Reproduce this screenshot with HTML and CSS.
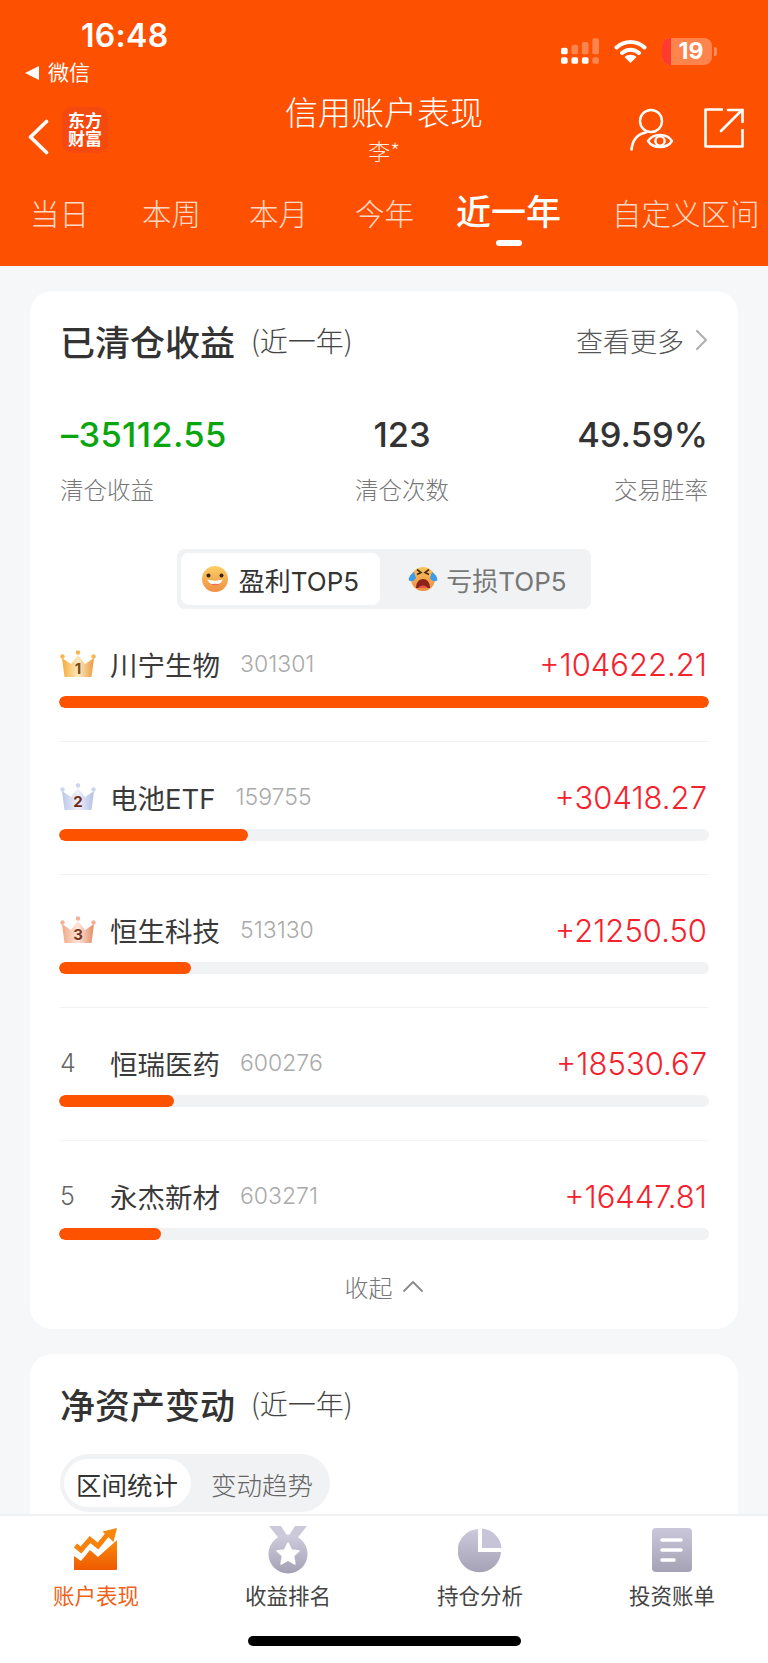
FILE: index.html
```
<!DOCTYPE html>
<html lang="zh-CN">
<head>
<meta charset="utf-8">
<title>信用账户表现</title>
<link rel="stylesheet" href="styles.css">
</head>
<body>
<div class="page">
  <header class="header">
    <div class="status">
      <div class="status-left">
        <div class="time">16:48</div>
        <div class="back-app"><span class="tri"></span>微信</div>
      </div>
      <div class="status-right">
        <svg class="signal" width="38" height="27" viewBox="0 0 40 28"><g fill="#fff"><rect x="0" y="10" width="7" height="7" rx="2"/><rect x="0" y="20" width="7" height="7" rx="2"/><rect x="11" y="20" width="7" height="7" rx="2"/><rect x="22" y="20" width="7" height="7" rx="2"/></g><g fill="#fff" opacity=".3"><rect x="11" y="7" width="7" height="10" rx="2"/><rect x="22" y="4" width="7" height="13" rx="2"/><rect x="33" y="0" width="7" height="17" rx="2"/></g><rect x="33" y="20" width="7" height="7" rx="2" fill="#fff" opacity=".3"/></svg>
        <svg class="wifi" width="33" height="25" viewBox="0 0 33 25"><path d="M2.5 9.5C10.5 2 22.5 2 30.5 9.5M8 15C13 10.5 20 10.5 25 15" fill="none" stroke="#fff" stroke-width="4" stroke-linecap="round"/><path d="M16.5 25L10.5 19C14 16 19 16 22.5 19Z" fill="#fff"/></svg>
        <div class="battery"><div class="battery-body"><span class="battery-red"></span><span class="battery-num">19</span></div><span class="battery-nub"></span></div>
      </div>
    </div>
    <div class="titlebar">
      <div class="titlebar-left">
        <svg class="chevron-back" width="22" height="36" viewBox="0 0 22 36"><path d="M19.5 2.5L3.5 18L19.5 33.5" fill="none" stroke="#fff" stroke-width="3.6" stroke-linecap="round" stroke-linejoin="round"/></svg>
        <div class="logo"><span>东方</span><span>财富</span></div>
      </div>
      <div class="titlebar-center">
        <div class="title">信用账户表现</div>
        <div class="subtitle">李*</div>
      </div>
      <div class="titlebar-right">
        <svg width="44" height="44" viewBox="0 0 44 44"><circle cx="22" cy="13" r="11" fill="none" stroke="#fff" stroke-width="2.4"/><path d="M2.5 41.5C3.5 32 9 26 17 24.5" fill="none" stroke="#fff" stroke-width="2.6" stroke-linecap="round"/><path d="M19 33C24 25 38 25 43 33C38 41 24 41 19 33Z" fill="#fd5000" stroke="#fff" stroke-width="2.4" stroke-linejoin="round"/><circle cx="31" cy="33" r="4.6" fill="none" stroke="#fff" stroke-width="2.4"/></svg>
        <svg width="40" height="40" viewBox="0 0 40 40"><path d="M19 1.5H1.5V38.5H38.5V21" fill="none" stroke="#fff" stroke-width="2.6" stroke-linejoin="round"/><path d="M17 23L38 2M24 2H38.5V14" fill="none" stroke="#fff" stroke-width="2.6" stroke-linecap="round"/></svg>
      </div>
    </div>
    <nav class="ranges">
      <span class="range r1">当日</span>
      <span class="range r2">本周</span>
      <span class="range r3">本月</span>
      <span class="range r4">今年</span>
      <span class="range active">近一年</span>
      <span class="range r6">自定义区间</span>
    </nav>
  </header>

  <main class="content">
    <section class="card">
      <div class="card-head">
        <h2 class="card-title">已清仓收益</h2><span class="card-range">(近一年)</span>
        <span class="more">查看更多<svg width="13" height="22" viewBox="0 0 13 22"><path d="M2 2L11 11L2 20" fill="none" stroke="#b0b0b0" stroke-width="2.2" stroke-linecap="round" stroke-linejoin="round"/></svg></span>
      </div>
      <div class="stats">
        <div class="stat"><div class="stat-num green">–35112.55</div><div class="stat-label">清仓收益</div></div>
        <div class="stat center"><div class="stat-num">123</div><div class="stat-label">清仓次数</div></div>
        <div class="stat right"><div class="stat-num">49.59%</div><div class="stat-label">交易胜率</div></div>
      </div>
      <div class="switch-wrap">
        <div class="switch">
          <div class="switch-item on">
            <svg width="26" height="26" viewBox="0 0 26 26"><defs><linearGradient id="fs" x1="0" y1="0" x2="0" y2="1"><stop offset="0" stop-color="#fbd063"/><stop offset="1" stop-color="#ef8f45"/></linearGradient></defs><circle cx="13" cy="13" r="13" fill="url(#fs)"/><circle cx="6.500" cy="9.500" r="2" fill="#3a2418"/><circle cx="19.500" cy="9.500" r="2" fill="#3a2418"/><path d="M5.500 13.500C10 15 16 15 20.500 13.500C19.500 20 6.500 20 5.500 13.500Z" fill="#fff"/><path d="M9 18.200C11 19.500 15 19.500 17 18.200C15 17.500 11 17.500 9 18.200Z" fill="#ef6a5a"/></svg>
            盈利TOP5
          </div>
          <div class="switch-item">
            <svg width="30" height="26" viewBox="0 0 30 26"><defs><linearGradient id="fc" x1="0" y1="0" x2="0" y2="1"><stop offset="0" stop-color="#f8c45c"/><stop offset="1" stop-color="#ee8c40"/></linearGradient></defs><circle cx="15" cy="13" r="12" fill="url(#fc)"/><path d="M9 3.500L13 6.500L9 8.500M21 3.500L17 6.500L21 8.500" fill="none" stroke="#4a2c18" stroke-width="1.600"/><path d="M8 22C8 10 22 10 22 22Z" fill="#8c2318"/><path d="M10.500 22C11 18.500 19 18.500 19.500 22Z" fill="#e9574a"/><path d="M6 6C2 9 0 12 1 14.500C3 16 7 15 8 12Z" fill="#3d9be9"/><path d="M24 6C28 9 30 12 29 14.500C27 16 23 15 22 12Z" fill="#3d9be9"/></svg>
            亏损TOP5
          </div>
        </div>
      </div>

      <ul class="rank-list">
        <li class="rank">
          <div class="rank-top">
            <svg class="crown" width="36" height="27" viewBox="0 0 36 27"><defs><linearGradient id="c1" x1="0" y1="0" x2="1" y2="0"><stop offset="0" stop-color="#f5aa38"/><stop offset=".5" stop-color="#fdeac0"/><stop offset="1" stop-color="#eb9a3e"/></linearGradient></defs><path d="M4.500 27L2 8L11 14L18 5L25 14L34 8L31.500 27Z" fill="url(#c1)"/><circle cx="2.500" cy="6.500" r="2.200" fill="#f3b74f"/><circle cx="18" cy="2.500" r="2.200" fill="#f3b74f"/><circle cx="33.500" cy="6.500" r="2.200" fill="#f3b74f"/><text x="18" y="23.500" class="crown-num" fill="#7a4a16">1</text></svg>
            <span class="rank-name">川宁生物</span><span class="rank-code">301301</span>
            <span class="rank-value">+104622.21</span>
          </div>
          <div class="bar"><div class="bar-fill" style="width:100%"></div></div>
        </li>
        <li class="rank">
          <div class="rank-top">
            <svg class="crown" width="36" height="27" viewBox="0 0 36 27"><defs><linearGradient id="c2" x1="0" y1="0" x2="1" y2="0"><stop offset="0" stop-color="#bcc7e8"/><stop offset=".5" stop-color="#eef0f9"/><stop offset="1" stop-color="#b4bfe6"/></linearGradient></defs><path d="M4.500 27L2 8L11 14L18 5L25 14L34 8L31.500 27Z" fill="url(#c2)"/><circle cx="2.500" cy="6.500" r="2.200" fill="#cdd5ee"/><circle cx="18" cy="2.500" r="2.200" fill="#cdd5ee"/><circle cx="33.500" cy="6.500" r="2.200" fill="#cdd5ee"/><text x="18" y="23.500" class="crown-num" fill="#6e2c1c">2</text></svg>
            <span class="rank-name">电池ETF</span><span class="rank-code">159755</span>
            <span class="rank-value">+30418.27</span>
          </div>
          <div class="bar"><div class="bar-fill" style="width:29%"></div></div>
        </li>
        <li class="rank">
          <div class="rank-top">
            <svg class="crown" width="36" height="27" viewBox="0 0 36 27"><defs><linearGradient id="c3" x1="0" y1="0" x2="1" y2="0"><stop offset="0" stop-color="#f1a786"/><stop offset=".5" stop-color="#fde6da"/><stop offset="1" stop-color="#e58a62"/></linearGradient></defs><path d="M4.500 27L2 8L11 14L18 5L25 14L34 8L31.500 27Z" fill="url(#c3)"/><circle cx="2.500" cy="6.500" r="2.200" fill="#f2b097"/><circle cx="18" cy="2.500" r="2.200" fill="#f2b097"/><circle cx="33.500" cy="6.500" r="2.200" fill="#f2b097"/><text x="18" y="23.500" class="crown-num" fill="#7b3a20">3</text></svg>
            <span class="rank-name">恒生科技</span><span class="rank-code">513130</span>
            <span class="rank-value">+21250.50</span>
          </div>
          <div class="bar"><div class="bar-fill" style="width:20.3%"></div></div>
        </li>
        <li class="rank">
          <div class="rank-top">
            <span class="rank-idx">4</span>
            <span class="rank-name">恒瑞医药</span><span class="rank-code">600276</span>
            <span class="rank-value">+18530.67</span>
          </div>
          <div class="bar"><div class="bar-fill" style="width:17.7%"></div></div>
        </li>
        <li class="rank">
          <div class="rank-top">
            <span class="rank-idx">5</span>
            <span class="rank-name">永杰新材</span><span class="rank-code">603271</span>
            <span class="rank-value">+16447.81</span>
          </div>
          <div class="bar"><div class="bar-fill" style="width:15.7%"></div></div>
        </li>
      </ul>
      <div class="collapse">收起<svg width="22" height="13" viewBox="0 0 22 13"><path d="M2 11L11 2L20 11" fill="none" stroke="#8a8a8a" stroke-width="1.8" stroke-linecap="round" stroke-linejoin="round"/></svg></div>
    </section>

    <section class="card card-second">
      <div class="card-head">
        <h2 class="card-title">净资产变动</h2><span class="card-range">(近一年)</span>
      </div>
      <div class="pill">
        <span class="pill-item on">区间统计</span>
        <span class="pill-item">变动趋势</span>
      </div>
    </section>
  </main>

  <footer class="tabbar">
    <div class="tabs">
      <div class="tab on">
        <svg width="44" height="44" viewBox="0 0 44 44"><defs><linearGradient id="t1" x1="0" y1="0" x2="0" y2="1"><stop offset="0" stop-color="#f98a0c"/><stop offset="1" stop-color="#ee5a00"/></linearGradient></defs><path d="M0 42V28L7 33L16 22L24 29L43 12V41Q43 42 42 42Z" fill="url(#t1)"/><path d="M1.500 17.500L7 22L16 11.500L24 18L33 7" fill="none" stroke="#f8820c" stroke-width="5"/><path d="M28.500 3.500L43 0L39.500 14Z" fill="#f8860c"/></svg>
        <span>账户表现</span>
      </div>
      <div class="tab">
        <svg width="40" height="48" viewBox="0 0 40 48"><defs><linearGradient id="t2" x1="0" y1="0" x2="0" y2="1"><stop offset="0" stop-color="#cfcddd"/><stop offset="1" stop-color="#a3a1b3"/></linearGradient></defs><path d="M1 0H13L20 11L27 0H39L27 15H13Z" fill="#cbc9da"/><circle cx="20" cy="28" r="19.500" fill="url(#t2)"/><path d="M20 17L23.500 24L31 25L25.500 30L27 38L20 34L13 38L14.500 30L9 25L16.500 24Z" fill="#fff" stroke="#fff" stroke-width="1.500" stroke-linejoin="round"/></svg>
        <span>收益排名</span>
      </div>
      <div class="tab">
        <svg width="44" height="44" viewBox="0 0 44 44"><defs><linearGradient id="t3" x1="0" y1="0" x2="0" y2="1"><stop offset="0" stop-color="#cbc9db"/><stop offset="1" stop-color="#a4a2b4"/></linearGradient></defs><path d="M20 1V24H43A21.700 21.700 0 1 1 20 1Z" fill="url(#t3)"/><path d="M24 0.500A21.700 21.700 0 0 1 43.500 20H24Z" fill="#c6c4d6"/></svg>
        <span>持仓分析</span>
      </div>
      <div class="tab">
        <svg width="40" height="44" viewBox="0 0 40 44"><defs><linearGradient id="t4" x1="0" y1="0" x2="0" y2="1"><stop offset="0" stop-color="#c9c7d9"/><stop offset="1" stop-color="#a4a2b4"/></linearGradient></defs><rect x="0" y="0" width="40" height="44" rx="4" fill="url(#t4)"/><g fill="none" stroke="#fff" stroke-width="3.600" stroke-linecap="round"><path d="M10 12H29M10 22H29M10 32H22"/></g></svg>
        <span>投资账单</span>
      </div>
    </div>
    <div class="home-bar"></div>
  </footer>
</div>
</body>
</html>
```

FILE: styles.css
```
* { box-sizing: border-box; }
html, body { margin: 0; padding: 0; }
body {
  font-family: "Inter", "Noto Sans CJK SC", sans-serif;
  background: #f6f7f9;
  color: #333;
}
.page {
  width: 768px;
  height: 1663px;
  display: flex;
  flex-direction: column;
  overflow: hidden;
}

/* header */
.header { height: 266px; background: #fd5000; color: #fff; flex: none; }
.status { height: 92px; display: flex; justify-content: space-between; }
.status-left { padding: 16px 0 0 25px; }
.time { font-size: 32px; font-weight: 600; line-height: 40px; padding-left: 56px; letter-spacing: .3px; }
.back-app { font-size: 21px; line-height: 28px; display: flex; align-items: center; gap: 9px; margin-top: 3px; }
.tri { width: 0; height: 0; border: 7px solid transparent; border-left: 0; border-right: 14px solid #fff; }
.status-right { display: flex; align-items: flex-start; gap: 15px; padding: 38px 51px 0 0; }
.battery { display: flex; align-items: center; gap: 2px; }
.battery-body { position: relative; width: 50px; height: 27px; border-radius: 8px; background: rgba(255,255,255,.3); overflow: hidden; text-align: center; font-size: 23px; font-weight: 700; line-height: 27px; }
.battery-red { position: absolute; left: 0; top: 0; bottom: 0; width: 9px; background: #ff3b30; }
.battery-num { position: relative; padding-left: 8px; }
.battery-nub { width: 3px; height: 9px; background: rgba(255,255,255,.35); border-radius: 0 2px 2px 0; }

.titlebar { height: 78px; display: grid; grid-template-columns: 1fr auto 1fr; }
.titlebar-left { display: flex; align-items: flex-start; padding: 22px 0 0 27px; gap: 13px; }
.chevron-back { margin-top: 5px; }
.logo { margin-top: -7px; width: 46px; height: 46px; background: #f44a10; border-radius: 10px; display: flex; flex-direction: column; align-items: center; justify-content: center; font-size: 17px; font-weight: 700; line-height: 18px; }
.titlebar-center { text-align: center; font-family: "Noto Sans CJK SC", sans-serif; font-weight: 300; margin-top: -3px; }
.title { font-size: 33px; line-height: 44px; }
.subtitle { font-size: 22px; line-height: 30px; margin-top: 2px; opacity: .9; }
.titlebar-right { display: flex; justify-content: flex-end; align-items: flex-start; gap: 31px; padding: 16px 24px 0 0; }

.ranges { height: 96px; display: flex; align-items: flex-start; padding: 22px 0 0 30px; font-family: "Noto Sans CJK SC", sans-serif; font-weight: 300; }
.range { font-size: 29.500px; line-height: 40px; color: rgba(255,255,255,.8); white-space: nowrap; }
.r2 { margin-left: 53px; }
.r3 { margin-left: 48px; }
.r4 { margin-left: 47px; }
.active { margin-left: 42px; font-size: 35px; font-weight: 500; color: #fff; position: relative; margin-top: -2px; }
.active::after { content: ""; position: absolute; left: 40px; top: 50px; width: 26px; height: 6px; border-radius: 3px; background: #fff; }
.r6 { margin-left: 51px; }

/* cards */
.content { flex: 1; min-height: 0; padding: 25px 30px 0; overflow: hidden; }
.card { background: #fff; border-radius: 22px; padding: 0 30px; height: 1038px; }
.card-second { margin-top: 25px; height: 400px; }
.card-head { display: flex; align-items: center; height: 100px; padding-bottom: 2px; }
.card-title { margin: 0; font-family: "Noto Sans CJK SC", sans-serif; font-size: 35px; font-weight: 500; color: #333; }
.card-range { font-family: "Noto Sans CJK SC", sans-serif; font-weight: 300; font-size: 28px; margin-left: 16px; color: #444; }
.more { margin-left: auto; font-family: "Noto Sans CJK SC", sans-serif; font-weight: 300; font-size: 27px; color: #555; display: flex; align-items: center; gap: 11px; }

.stats { display: grid; grid-template-columns: 1fr 1fr 1fr; margin-top: 22px; }
.stat-num { font-size: 34.500px; font-weight: 500; line-height: 44px; }
.stat-label { font-family: "Noto Sans CJK SC", sans-serif; font-weight: 300; font-size: 23.500px; line-height: 34px; color: #777; margin-top: 15px; }
.stat.center { text-align: center; padding-left: 36px; }
.stat.right { text-align: right; }
.green { color: #0aa50f; letter-spacing: .3px; padding-left: 1px; }

.switch-wrap { display: flex; justify-content: center; margin-top: 43px; }
.switch { display: flex; width: 414px; height: 60px; background: #f1f2f4; border-radius: 8px; padding: 4px; }
.switch-item { flex: 1; display: flex; align-items: center; justify-content: center; gap: 8px; padding-left: 8px; font-size: 26px; color: #777; font-weight: 400; border-radius: 8px; }
.switch-item.on { flex: none; width: 199px; gap: 11px; padding-left: 0; background: #fff; color: #333; }

.rank-list { list-style: none; margin: 0; padding: 0; }
.rank { height: 133px; padding-top: 35px; border-bottom: 1.500px solid #f1f2f4; }
.rank:last-child { border-bottom: 0; height: 128px; }
.rank-top { display: flex; align-items: center; height: 40px; }
.crown { flex: none; width: 36px; margin-top: -2px; }
.crown-num { font-size: 15px; font-weight: 700; text-anchor: middle; font-family: "Inter", sans-serif; }
.rank-idx { width: 36px; font-size: 25px; color: #666; font-weight: 300; }
.rank-name { font-size: 27.500px; color: #3a3a3a; margin-left: 14px; font-weight: 400; }
.rank-code { font-size: 23px; color: #aaa; margin-left: 20px; font-weight: 300; }
.rank-value { margin-left: auto; margin-right: 1px; font-size: 31px; color: #f5222d; font-weight: 300; }
.bar { height: 12px; background: #f1f2f4; border-radius: 6px; margin: 12px -1px 0; overflow: hidden; }
.bar-fill { height: 100%; background: #fd5300; border-radius: 6px; }

.collapse { display: flex; justify-content: center; align-items: center; gap: 9px; font-family: "Noto Sans CJK SC", sans-serif; font-weight: 300; font-size: 24px; color: #777; }

.pill { display: inline-flex; height: 58px; background: #f1f2f4; border-radius: 29px; padding: 5px 4px; }
.pill-item { display: flex; align-items: center; font-family: "Noto Sans CJK SC", sans-serif; font-weight: 300; font-size: 25.500px; color: #666; border-radius: 24px; padding: 0 13px 0 20px; }
.pill-item.on { background: #fff; color: #333; font-weight: 400; padding: 0 13px 0 12px; }

/* bottom bar */
.tabbar { flex: none; height: 149px; background: #fff; border-top: 2px solid #f0f1f3; position: relative; }
.tabs { display: grid; grid-template-columns: repeat(4, 1fr); }
.tab { height: 100px; display: flex; flex-direction: column; align-items: center; padding-top: 10px; font-family: "Noto Sans CJK SC", sans-serif; font-weight: 400; font-size: 21.500px; color: #444; }
.tab svg { height: 48px; flex: none; }
.tab span { line-height: 32px; margin-top: 5px; }
.tab.on { color: #f0621a; }
.home-bar { width: 273px; height: 10px; border-radius: 5px; background: #000; margin: 20px auto 0; }
```
